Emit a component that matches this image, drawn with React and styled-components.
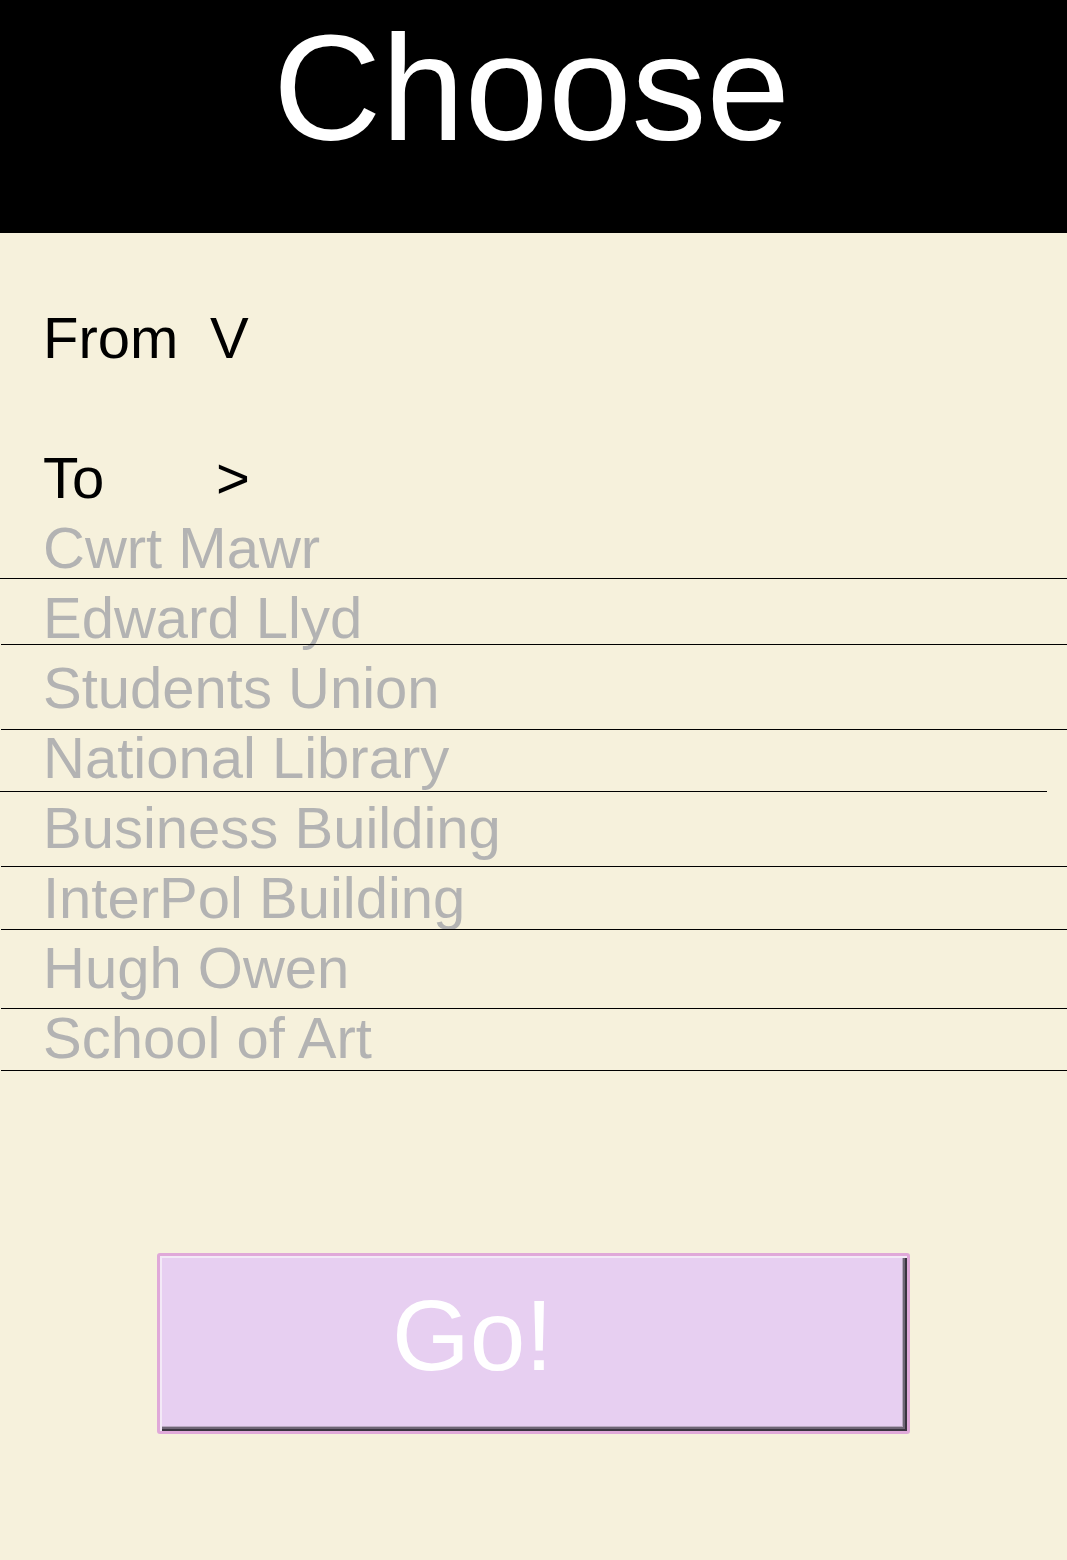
import React from "react";
import styled, { createGlobalStyle } from "styled-components";

const Global = createGlobalStyle`
  html, body {
    margin: 0;
    padding: 0;
    background: #f6f1dc;
  }
  body {
    font-family: "Liberation Sans", Arial, sans-serif;
    min-height: 1560px;
  }
`;

const Page = styled.div`
  width: 1067px;
  min-height: 1560px;
  background: #f6f1dc;
`;

const Header = styled.header`
  height: 233px;
  background: #000;
  color: #fff;
  text-align: center;
  box-sizing: border-box;
  padding-top: 2px;
  padding-right: 4px;
`;

const Title = styled.h1`
  margin: 0;
  font-weight: 400;
  font-size: 150px;
  line-height: 172px;
  font-family: "Liberation Sans", Arial, sans-serif;
`;

const Body = styled.main`
  padding-top: 70px;
`;

const FieldRow = styled.div`
  display: grid;
  grid-template-columns: 167px auto;
  padding-left: 43px;
  font-size: 58px;
  line-height: 70px;
  color: #000;
  margin-bottom: ${(p) => p.$gap || 0}px;
`;

const Label = styled.span``;

const Toggle = styled.span`
  padding-left: ${(p) => p.$shift || 0}px;
`;

const List = styled.ul`
  list-style: none;
  margin: 0;
  padding: 0;
`;

const Item = styled.li`
  position: relative;
  height: 70px;
  padding-left: 43px;
  font-size: 58px;
  line-height: 70px;
  color: #b3b3b3;
  white-space: nowrap;

  &::after {
    content: "";
    position: absolute;
    top: ${(p) => p.$rule}px;
    left: ${(p) => p.$left}px;
    right: ${(p) => p.$right}px;
    height: 1px;
    background: #000;
  }
`;

const ButtonWrap = styled.div`
  display: flex;
  justify-content: center;
  padding-top: 180px;
`;

const GoButton = styled.button`
  width: 753px;
  height: 181px;
  box-sizing: border-box;
  border: 3px solid #e0a9d9;
  border-radius: 3px;
  background: #e7cff1;
  color: #fff;
  font-family: "Liberation Sans", Arial, sans-serif;
  font-size: 100px;
  line-height: 100px;
  padding: 29px 122px 46px 0;
  text-align: center;
  cursor: pointer;
  box-shadow:
    inset 2px 2px 0 #f3e9f7,
    inset -2px -2px 0 #3a3440,
    inset -4px -4px 0 #6f6676,
    inset -5px -5px 0 #b8a8c0;
`;

const places = [
  { name: "Cwrt Mawr", rule: 65, left: 0, right: 0 },
  { name: "Edward Llyd", rule: 61, left: 1, right: 0 },
  { name: "Students Union", rule: 76, left: 1, right: 0 },
  { name: "National Library", rule: 68, left: 0, right: 20 },
  { name: "Business Building", rule: 73, left: 1, right: 0 },
  { name: "InterPol Building", rule: 66, left: 1, right: 0 },
  { name: "Hugh Owen", rule: 75, left: 1, right: 0 },
  { name: "School of Art", rule: 67, left: 1, right: 0 },
];

export default function App() {
  return (
    <Page>
      <Global />
      <Header>
        <Title>Choose</Title>
      </Header>
      <Body>
        <FieldRow $gap={70}>
          <Label>From</Label>
          <Toggle>V</Toggle>
        </FieldRow>
        <FieldRow>
          <Label>To</Label>
          <Toggle $shift={6}>&gt;</Toggle>
        </FieldRow>
        <List>
          {places.map((p) => (
            <Item key={p.name} $rule={p.rule} $left={p.left} $right={p.right}>
              {p.name}
            </Item>
          ))}
        </List>
        <ButtonWrap>
          <GoButton>Go!</GoButton>
        </ButtonWrap>
      </Body>
    </Page>
  );
}
